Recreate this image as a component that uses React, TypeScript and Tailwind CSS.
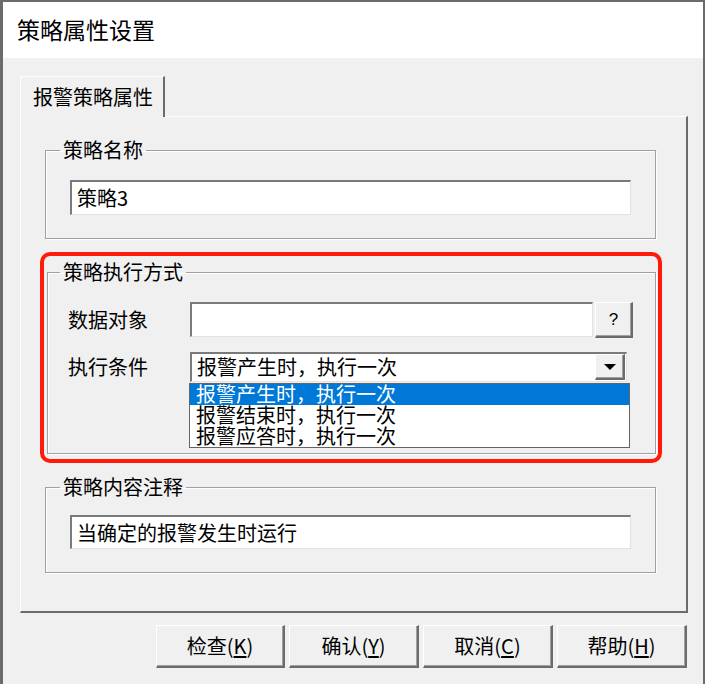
import React from "react";

const sunken =
  "bg-white border-t-2 border-l-2 border-b border-r border-t-[#7a7a7a] border-l-[#7a7a7a] border-b-[#e3e3e3] border-r-[#e3e3e3]";
const raised =
  "bg-[#f0f0f0] border-t border-l border-t-white border-l-white border-r-2 border-b-2 border-r-[#6b6b6b] border-b-[#6b6b6b] shadow-[inset_-1px_-1px_0_#a0a0a0]";
const group =
  "border border-[#a0a0a0] shadow-[1px_1px_0_#fff,inset_1px_1px_0_#fff]";

function Btn({ label, k, w }: { label: string; k: string; w: string }) {
  return (
    <div className={`${raised} ${w} h-[43px] flex items-center justify-center text-[20px] leading-[20px]`}>
      <span>
        {label}(<span className="underline underline-offset-2">{k}</span>)
      </span>
    </div>
  );
}

export default function App() {
  return (
    <div className="w-[705px] h-[684px] flex flex-col bg-[#f0f0f0] border-l-[3px] border-t-2 border-r-2 border-[#6b6b6b] text-black font-['Noto_Sans_CJK_SC',sans-serif] overflow-hidden">
      <div className="h-[56px] shrink-0 bg-white flex items-center pl-[14px] pb-[2px] text-[23px] leading-[24px]">
        策略属性设置
      </div>
      <div className="flex-1 flex flex-col pl-[17px] pr-[15px] pt-[18px]">
        <div className="flex h-[40px]">
          <div className="relative z-10 w-[145px] h-[41px] bg-[#f0f0f0] border-t border-l border-t-white border-l-white border-r-2 border-r-[#6b6b6b] rounded-tl-[2px] pl-[12px] pt-[10px] text-[20px] leading-[20px]">
            报警策略属性
          </div>
        </div>
        <div className="h-[497px] flex flex-col border-t border-l border-t-white border-l-white border-r-2 border-b-2 border-r-[#6b6b6b] border-b-[#6b6b6b] pl-[24px] pr-[30px] pt-[23px]">
          <fieldset className={group}>
            <legend className="ml-[14px] px-[3px] text-[20px] leading-[20px]">策略名称</legend>
            <div className="px-[24px] pt-[20px] pb-[23px]">
              <div className={`${sunken} h-[35px] flex items-center pl-[5px] text-[20px] leading-[20px]`}>
                策略3
              </div>
            </div>
          </fieldset>

          <div className="mt-[13px] -ml-[5px] -mr-[6px] border-4 border-[#ff1a0a] rounded-[10px] pl-[3px] pr-[2px] pt-[6px] pb-[5px]">
            <fieldset className={group}>
              <legend className="ml-[12px] px-[3px] text-[20px] leading-[20px]">策略执行方式</legend>
              <div className="pl-[20px] pr-[22px] pt-[20px] pb-[71px]">
                <div className="flex items-center h-[36px]">
                  <div className="w-[122px] text-[20px] leading-[20px]">数据对象</div>
                  <div className={`${sunken} w-[403px] h-[35px] self-start`} />
                  <div className={`${raised} ml-[2px] w-[38px] h-[36px] flex items-center justify-center text-[17px] leading-[17px] font-['Liberation_Sans',sans-serif]`}>
                    ?
                  </div>
                </div>
                <div className="flex items-center h-[30px] mt-[14px]">
                  <div className="w-[122px] text-[20px] leading-[20px]">执行条件</div>
                  <div className="relative w-[437px] h-[30px]">
                    <div className={`${sunken} h-[30px] flex items-start`}>
                      <div className="flex-1 pl-[5px] pt-[3px] text-[20px] leading-[20px]">报警产生时，执行一次</div>
                      <div className={`${raised} w-[30px] h-[26px] mr-px flex items-center justify-center`}>
                        <svg width="12" height="6" viewBox="0 0 12 6">
                          <polygon points="0,0 12,0 6,6" fill="#000" />
                        </svg>
                      </div>
                    </div>
                    <div className="absolute left-[-1px] top-[31px] w-[441px] bg-white border border-[#646464] text-[20px] leading-[20px]">
                      <div className="h-[21px] bg-[#0078d7] text-white pl-[6px]">报警产生时，执行一次</div>
                      <div className="h-[21px] pl-[6px]">报警结束时，执行一次</div>
                      <div className="h-[21px] pl-[6px]">报警应答时，执行一次</div>
                    </div>
                  </div>
                </div>
              </div>
            </fieldset>
          </div>

          <fieldset className={`${group} mt-[14px]`}>
            <legend className="ml-[14px] px-[3px] text-[20px] leading-[20px]">策略内容注释</legend>
            <div className="px-[24px] pt-[18px] pb-[23px]">
              <div className={`${sunken} h-[34px] flex items-center pl-[5px] text-[20px] leading-[20px]`}>
                当确定的报警发生时运行
              </div>
            </div>
          </fieldset>
        </div>
        <div className="flex justify-end gap-[4px] mt-[12px] pr-px">
          <Btn label="检查" k="K" w="w-[129px]" />
          <Btn label="确认" k="Y" w="w-[130px]" />
          <Btn label="取消" k="C" w="w-[130px]" />
          <Btn label="帮助" k="H" w="w-[130px]" />
        </div>
      </div>
    </div>
  );
}
